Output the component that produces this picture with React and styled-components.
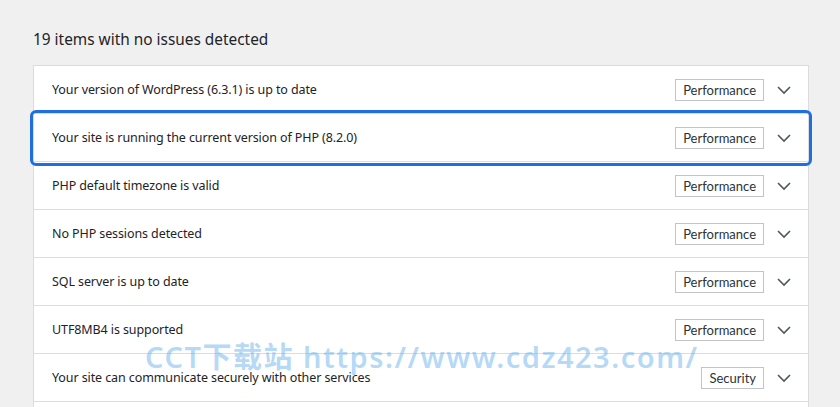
import React from 'react';
import styled, { createGlobalStyle } from 'styled-components';

const Global = createGlobalStyle`
  body {
    margin: 0;
    background: #f0f0f1;
    font-family: "Noto Sans", "Open Sans", sans-serif;
    color: #1d2327;
  }
`;

const Page = styled.div`
  position: relative;
  width: 840px;
  height: 407px;
  overflow: hidden;
  padding: 29px 31px 0 33px;
  box-sizing: border-box;
`;

const Heading = styled.h2`
  margin: 0 0 15px;
  font-size: 15.4px;
  font-weight: 400;
  line-height: 21px;
  color: #1d2327;
`;

const Panel = styled.div`
  background: #fff;
  border: 1px solid #dcdcde;
  border-bottom: none;
  width: 776px;
  box-sizing: border-box;
`;

const Row = styled.div`
  position: relative;
  display: flex;
  align-items: center;
  height: 48px;
  padding: 0 16px 0 18px;
  border-bottom: 1px solid #dcdcde;
  box-sizing: border-box;
  outline: ${(p) => (p.$active ? '3px solid #1f6fe0' : 'none')};
  outline-offset: 1px;
  border-radius: ${(p) => (p.$active ? '2px' : '0')};
  z-index: ${(p) => (p.$active ? 1 : 0)};
`;

const Label = styled.span`
  flex: 1;
  font-size: 12.5px;
  color: #1d2327;
  letter-spacing: -0.1px;
`;

const Badge = styled.span`
  font-family: Lato, "Noto Sans", sans-serif;
  font-size: 13px;
  color: #2c3338;
  border: 1px solid #c3c4c7;
  padding: 2px 7px;
  line-height: 16px;
  margin-right: 12px;
`;

const Chevron = styled.svg`
  width: 16px;
  height: 16px;
  color: #50575e;
`;

const Watermark = styled.div`
  position: absolute;
  left: 145px;
  top: 334px;
  font-family: "Noto Sans", "Noto Sans CJK SC", sans-serif;
  font-size: 29px;
  font-weight: 600;
  letter-spacing: 1.5px;
  color: rgba(90, 170, 235, 0.45);
  white-space: nowrap;
  pointer-events: none;
  z-index: 5;
`;

const items = [
  ['Your version of WordPress (6.3.1) is up to date', 'Performance'],
  ['Your site is running the current version of PHP (8.2.0)', 'Performance', true],
  ['PHP default timezone is valid', 'Performance'],
  ['No PHP sessions detected', 'Performance'],
  ['SQL server is up to date', 'Performance'],
  ['UTF8MB4 is supported', 'Performance'],
  ['Your site can communicate securely with other services', 'Security'],
];

export default function App() {
  return (
    <Page>
      <Global />
      <Heading>19 items with no issues detected</Heading>
      <Panel>
        {items.map(([text, tag, active]) => (
          <Row key={text} $active={active}>
            <Label>{text}</Label>
            <Badge>{tag}</Badge>
            <Chevron viewBox="0 0 16 16" fill="none">
              <path d="M2 5l6 6 6-6" stroke="currentColor" strokeWidth="1.6" />
            </Chevron>
          </Row>
        ))}
        <Row />
      </Panel>
      <Watermark>CCT下载站 https://www.cdz423.com/</Watermark>
    </Page>
  );
}
